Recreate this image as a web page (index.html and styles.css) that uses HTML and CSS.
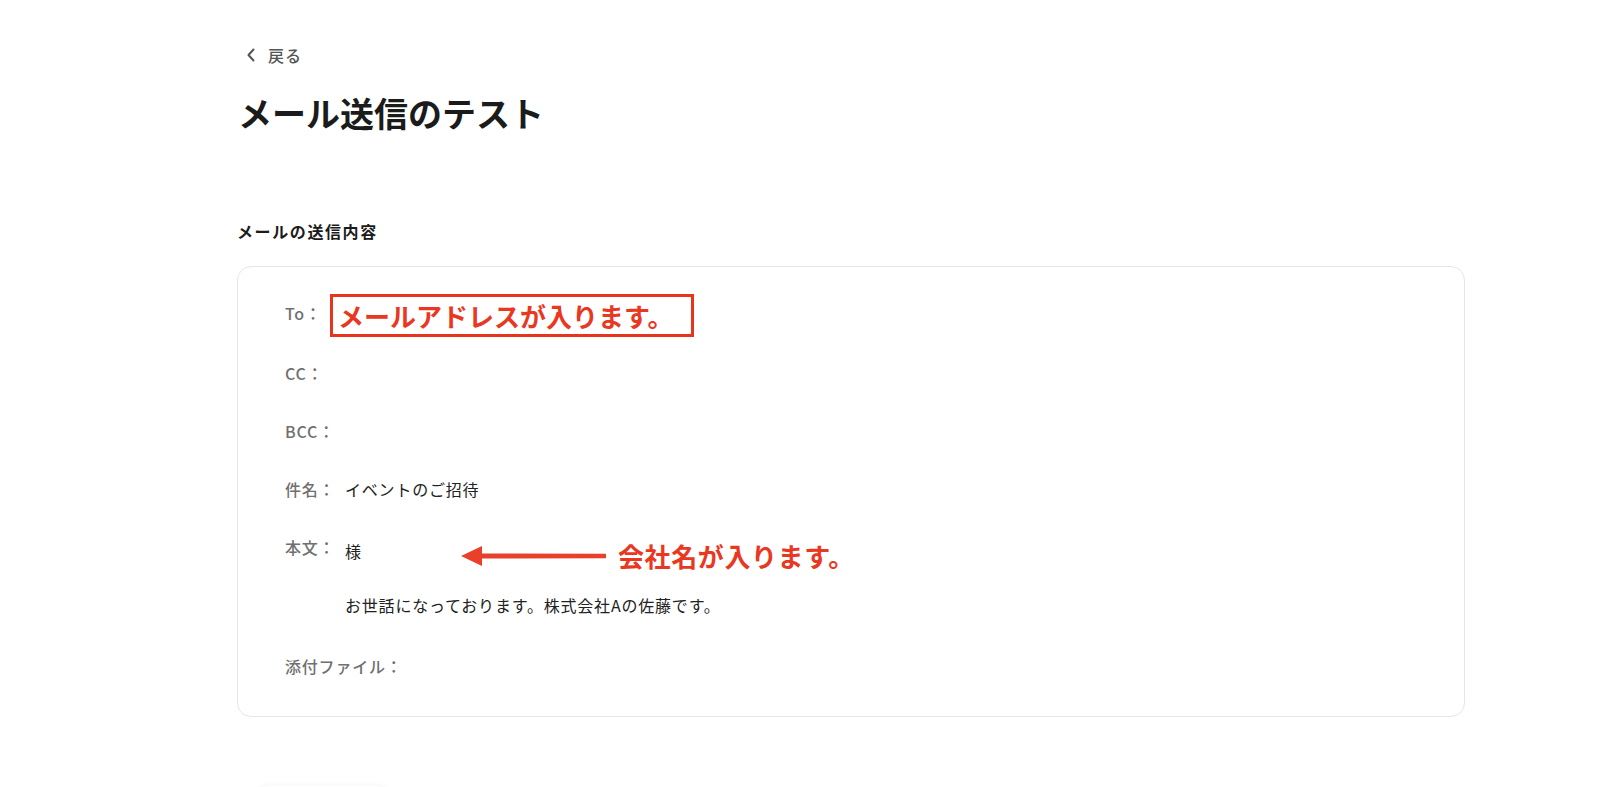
FILE: index.html
```html
<!DOCTYPE html>
<html lang="ja">
<head>
<meta charset="utf-8">
<title>メール送信のテスト</title>
<link rel="stylesheet" href="styles.css">
</head>
<body>
<main class="page">
  <a class="back" href="#">
    <svg class="back-icon" width="10" height="14" viewBox="0 0 10 14"><path d="M7.5 1.5 L2.5 7 L7.5 12.5" fill="none" stroke="#555" stroke-width="2" stroke-linecap="round" stroke-linejoin="round"/></svg>
    <span>戻る</span>
  </a>
  <h1 class="title">メール送信のテスト</h1>

  <h2 class="section-label">メールの送信内容</h2>
  <section class="card">
    <div class="label">To：</div>
    <div class="value">
      <div class="note-box">メールアドレスが入ります。</div>
    </div>

    <div class="label">CC：</div>
    <div class="value"></div>

    <div class="label">BCC：</div>
    <div class="value"></div>

    <div class="label">件名：</div>
    <div class="value">イベントのご招待</div>

    <div class="label">本文：</div>
    <div class="value body-text">
      <p class="para">様</p>
      <div class="note-arrow">
        <svg width="146" height="24" viewBox="0 0 146 24"><polygon points="0,12 21,2 21,22" fill="#e9402a"/><polygon points="20,9.5 145,9.8 145,14.2 20,14.5" fill="#e9402a"/></svg>
        <span class="note-text">会社名が入ります。</span>
      </div>
      <p class="para">お世話になっております。株式会社Aの佐藤です。</p>
    </div>

    <div class="label wide">添付ファイル：</div>
  </section>

  <div class="footer-btn"></div>
</main>
</body>
</html>
```
FILE: styles.css
```css
* { box-sizing: border-box; }
html, body { margin: 0; padding: 0; background: #ffffff; }
body {
  font-family: "Noto Sans CJK JP", "Noto Sans", sans-serif;
  color: #1f1f1f;
  overflow: hidden;
}
.page {
  width: 1228px;
  margin-left: 237px;
  padding-top: 43px;
}
.back {
  display: flex;
  align-items: center;
  gap: 12px;
  height: 24px;
  color: #555555;
  text-decoration: none;
  font-size: 16px;
  font-weight: 500;
  letter-spacing: 1px;
  padding-left: 9px;
}
.back-icon { display: block; }
.title {
  margin: 22px 0 0 1px;
  font-size: 34px;
  line-height: 48px;
  font-weight: 700;
  color: #1b1b1b;
}
.section-label {
  margin: 82px 0 0 0;
  font-size: 16px;
  line-height: 24px;
  font-weight: 700;
  letter-spacing: 0.1em;
  color: #1b1b1b;
}
.card {
  margin-top: 23px;
  border: 1px solid #e6e6e6;
  border-radius: 14px;
  padding: 34px 47px 38px;
  display: grid;
  grid-template-columns: 60px 1fr;
  row-gap: 34px;
  font-size: 16px;
  line-height: 24px;
  letter-spacing: 0.05em;
}
.label {
  color: #707070;
  font-weight: 500;
  white-space: nowrap;
}
.label.wide { grid-column: 1 / -1; margin-top: 3px; }
.value {
  color: #222222;
  position: relative;
  min-height: 24px;
}
.card > .label:first-child { margin-bottom: 2px; }
.body-text {
  display: flex;
  flex-direction: column;
  gap: 30px;
  padding-top: 4px;
}
.para { margin: 0; }
.note-box {
  position: absolute;
  left: -15px;
  top: -7px;
  width: 364px;
  height: 43px;
  border: 3px solid #e8341c;
  color: #e9381f;
  font-size: 26px;
  line-height: 37px;
  font-weight: 700;
  letter-spacing: 0;
  padding-left: 5px;
  white-space: nowrap;
}
.note-arrow {
  position: absolute;
  left: 116px;
  top: 3px;
  height: 36px;
  display: flex;
  align-items: center;
  gap: 11px;
}
.note-arrow svg { display: block; }
.note-text {
  color: #e9381f;
  font-size: 26px;
  line-height: 36px;
  font-weight: 700;
  letter-spacing: 0.6px;
  white-space: nowrap;
}
.footer-btn {
  margin-top: 69px;
  margin-left: 10px;
  width: 150px;
  height: 44px;
  border-radius: 22px;
  background: #ffffff;
  box-shadow: 0 -1px 6px rgba(0, 0, 0, 0.04);
}
```
